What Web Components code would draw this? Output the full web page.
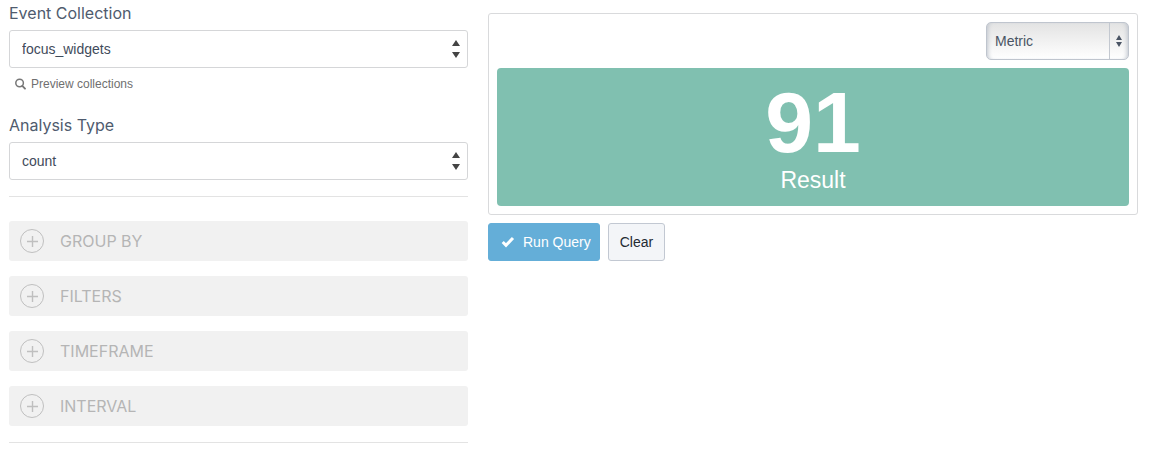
<!DOCTYPE html>
<html lang="en">
<head>
<meta charset="utf-8">
<title>Query Explorer</title>
<style>
  body { margin: 0; background: #fff; color: #4a5464; font: 14px/20px "Liberation Sans", Arial, sans-serif; }
</style>
</head>
<body>
<query-explorer>
  <query-form slot="form">
    <select-field label="Event Collection" value="focus_widgets"><preview-link>Preview collections</preview-link></select-field>
    <select-field label="Analysis Type" value="count"></select-field>
    <option-toggles slot="options">
      <option-toggle>GROUP BY</option-toggle>
      <option-toggle>FILTERS</option-toggle>
      <option-toggle>TIMEFRAME</option-toggle>
      <option-toggle>INTERVAL</option-toggle>
    </option-toggles>
  </query-form>
  <result-panel slot="result" value="91" caption="Result"></result-panel>
  <query-actions slot="result"></query-actions>
</query-explorer>

<script>
const define = (name, html, setup) => {
  const template = document.createElement('template');
  template.innerHTML = html;
  customElements.define(name, class extends HTMLElement {
    constructor() {
      super();
      this.attachShadow({ mode: 'open' }).append(template.content.cloneNode(true));
    }
    connectedCallback() { if (setup) setup(this, this.shadowRoot); }
  });
};

define('query-explorer', `
  <style>
    :host { display: grid; grid-template-columns: minmax(0, 459fr) minmax(0, 650fr); column-gap: 20px; padding: 0 21px 0 9px; }
    .result { padding-top: 13px; }
  </style>
  <div><slot name="form"></slot></div>
  <div class="result"><slot name="result"></slot></div>
`);

define('query-form', `
  <style>
    :host { display: block; padding-top: 1px; }
  </style>
  <form><slot></slot><slot name="options"></slot></form>
`);

define('select-field', `
  <style>
    :host { display: block; margin-bottom: 16px; }
    label { display: block; font: 16px/24px Inter, sans-serif; margin-bottom: 5px; color: #4f5b6e; }
    .box { display: grid; align-items: center; }
    select, svg { grid-area: 1 / 1; }
    select { appearance: none; width: 100%; height: 38px; margin: 0; padding: 0 12px; border: 1px solid #d5d6d8; border-radius: 3px; background: #fff; color: #3f4b5b; font: 14px/20px "Liberation Sans", Arial, sans-serif; }
    svg { justify-self: end; margin-right: 8px; pointer-events: none; }
  </style>
  <label for="field"></label>
  <div class="box">
    <select id="field"><option></option></select>
    <svg width="8" height="18" viewBox="0 0 8 18" fill="#444"><path d="M4 0 8 6H0zM4 18 0 12h8z"/></svg>
  </div>
  <slot></slot>
`, (el, root) => {
  root.querySelector('label').textContent = el.getAttribute('label');
  root.querySelector('option').textContent = el.getAttribute('value');
});

define('preview-link', `
  <style>
    :host { display: block; padding: 6px 0 3px 6px; }
    a { display: flex; align-items: center; gap: 5px; color: #6f6f6f; font-size: 12px; line-height: 20px; text-decoration: none; }
  </style>
  <a href="#preview"><svg width="11" height="12" viewBox="0 0 11 12" fill="none" stroke="#777"><circle cx="4.6" cy="5" r="3.8" stroke-width="1.5"/><path d="m7.3 7.8 2.7 2.9" stroke-width="1.8" stroke-linecap="round"/></svg><span><slot></slot></span></a>
`);

define('option-toggles', `
  <style>
    :host { display: flex; flex-direction: column; gap: 15px; padding: 24px 0 16px; border: solid #e3e3e3; border-width: 1px 0; }
  </style>
  <slot></slot>
`);

define('option-toggle', `
  <style>
    :host { display: block; }
    button { display: flex; align-items: center; gap: 16px; width: 100%; height: 40px; margin: 0; padding: 0 11px; border: 0; border-radius: 3px; background: #f1f1f1; color: #b5b5b5; font: 16px/24px Inter, sans-serif; }
  </style>
  <button type="button"><svg width="24" height="24" viewBox="0 0 24 24" fill="none" stroke="#bfbfbf"><circle cx="12" cy="12" r="11.5"/><path d="M7 12.5h11M12.5 7v11" stroke-width="1.4"/></svg><slot></slot></button>
`);

define('result-panel', `
  <style>
    :host { display: block; border: 1px solid #d9dadc; border-radius: 3px; padding: 8px; }
    .bar { display: flex; justify-content: flex-end; margin-bottom: 8px; }
    .metric { display: flex; flex-direction: column; align-items: center; padding: 10px 0 12px; border-radius: 4px; background: #80c0b0; color: #fff; text-align: center; }
    .value { font-size: 86px; line-height: 88px; font-weight: bold; }
    .caption { font-size: 23px; line-height: 28px; }
  </style>
  <div class="bar"><chart-type></chart-type></div>
  <div class="metric"><div class="value"></div><div class="caption"></div></div>
`, (el, root) => {
  root.querySelector('.value').textContent = el.getAttribute('value');
  root.querySelector('.caption').textContent = el.getAttribute('caption');
});

define('chart-type', `
  <style>
    :host { display: grid; align-items: center; width: 143px; }
    select, .arrows { grid-area: 1 / 1; }
    select { appearance: none; width: 100%; height: 38px; margin: 0; padding: 0 8px; border: 1px solid #bfc5ce; border-radius: 5px; background: linear-gradient(#e3e3e3, #fff); box-shadow: inset 4px 0 4px -3px #bfc5ce, inset -4px 0 4px -3px #bfc5ce; color: #4a5464; font: 14px/20px "Liberation Sans", Arial, sans-serif; }
    .arrows { display: flex; align-items: center; justify-content: center; justify-self: end; box-sizing: border-box; width: 20px; height: 36px; padding-right: 1px; border-left: 1px solid #c3c8d0; pointer-events: none; }
  </style>
  <select aria-label="Chart type"><option>Metric</option></select>
  <span class="arrows"><svg width="6" height="12" viewBox="0 0 6 12" fill="#4a5464"><path d="M3 0 6 5H0zM3 12 0 7h6z"/></svg></span>
`);

define('query-actions', `
  <style>
    :host { display: flex; gap: 8px; padding-top: 8px; }
    button { display: flex; align-items: center; gap: 8px; height: 38px; margin: 0; padding: 0 11px; border: 1px solid #c2c8d2; border-radius: 3px; background: #f3f5f8; color: #232a33; font: 14px/20px "Liberation Sans", Arial, sans-serif; }
    .run { padding: 0 8px 0 12px; border-color: #64aed8; background: #64aed8; color: #fff; }
  </style>
  <button class="run" type="submit"><svg width="14" height="12" viewBox="0 0 14 12" fill="none" stroke="#fff" stroke-width="3"><path d="m1.7 6 3.3 3.3L12 2"/></svg>Run Query</button>
  <button class="clear" type="button">Clear</button>
`);
</script>
</body>
</html>
